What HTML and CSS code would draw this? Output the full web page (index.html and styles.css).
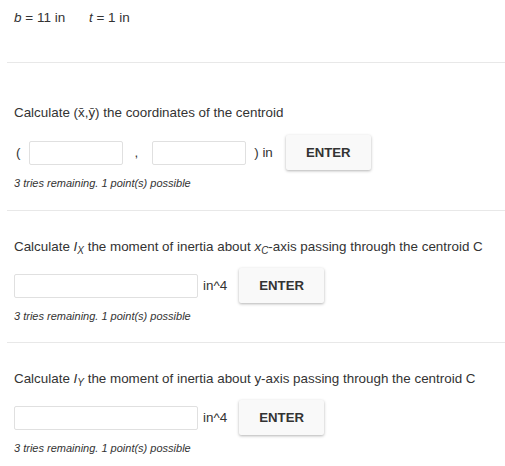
FILE: index.html
```html
<!DOCTYPE html>
<html lang="en">
<head>
  <meta charset="UTF-8">
  <title>Centroid and moment of inertia</title>
  <link rel="stylesheet" href="styles.css">
</head>
<body>

<div class="given">
  <span><i>b</i> = 11 in</span>
  <span><i>t</i> = 1 in</span>
</div>

<div class="problem first">
  <p class="question">Calculate (x&#772;,y&#772;) the coordinates of the centroid</p>
  <div class="answer">
    <span class="paren">(</span>
    <input type="text" class="small" id="xbar">
    <span class="comma">,</span>
    <input type="text" class="small" id="ybar">
    <span class="unit">) in</span>
    <button>ENTER</button>
  </div>
  <p class="tries">3 tries remaining. 1 point(s) possible</p>
</div>

<div class="problem">
  <p class="question">Calculate <i>I<sub>X</sub></i> the moment of inertia about <i>x<sub>C</sub></i>-axis passing through the centroid C</p>
  <div class="answer">
    <input type="text" class="wide" id="ix">
    <span class="unit">in^4</span>
    <button>ENTER</button>
  </div>
  <p class="tries">3 tries remaining. 1 point(s) possible</p>
</div>

<div class="problem">
  <p class="question">Calculate <i>I<sub>Y</sub></i> the moment of inertia about y-axis passing through the centroid C</p>
  <div class="answer">
    <input type="text" class="wide" id="iy">
    <span class="unit">in^4</span>
    <button>ENTER</button>
  </div>
  <p class="tries">3 tries remaining. 1 point(s) possible</p>
</div>

</body>
</html>
```

FILE: styles.css
```css
body {
  margin: 0;
  font-family: "Liberation Sans", Arial, sans-serif;
  color: #333;
  background-color: #fff;
}

.given {
  font-size: 13.5px;
  line-height: 16px;
  padding: 10px 0 0 14px;
  height: 62px;
  box-sizing: border-box;
}

.given span {
  margin-right: 20px;
}

.problem {
  margin-left: 7px;
  padding: 28px 0 0 7px;
  height: 132px;
  box-sizing: border-box;
  border-top: 1px solid #e8e8e8;
}

.problem.first {
  padding-top: 42px;
  height: 148px;
}

.question {
  margin: 0;
  font-size: 13.4px;
  line-height: 16px;
}

.question sub {
  font-size: 10px;
  vertical-align: -3px;
  line-height: 0;
}

.answer {
  display: flex;
  align-items: center;
  margin-top: 13px;
  height: 35px;
  font-size: 13.4px;
}

.first .answer {
  margin-top: 14px;
}

input[type="text"] {
  height: 24px;
  padding: 0 6px;
  border: 1px solid #e0e0e0;
  border-radius: 2px;
  box-sizing: border-box;
  background-color: #fff;
  font-family: inherit;
}

input.small {
  width: 94px;
}

input.wide {
  width: 184px;
}

.paren {
  margin: 0 9px 0 2px;
}

.comma {
  margin: 0 14px 0 11px;
}

.unit {
  margin: 0 12px 0 5px;
}

.first .unit {
  margin: 0 13px 0 8px;
}

button {
  width: 85px;
  height: 35px;
  border: none;
  border-radius: 2px;
  background-color: #f9f9f9;
  box-shadow: 0 1px 3px rgba(0, 0, 0, 0.3);
  font-family: inherit;
  font-size: 13.2px;
  font-weight: bold;
  color: #333;
  cursor: pointer;
}

.tries {
  margin: 7px 0 0;
  font-size: 11px;
  line-height: 12px;
  font-style: italic;
}
```
